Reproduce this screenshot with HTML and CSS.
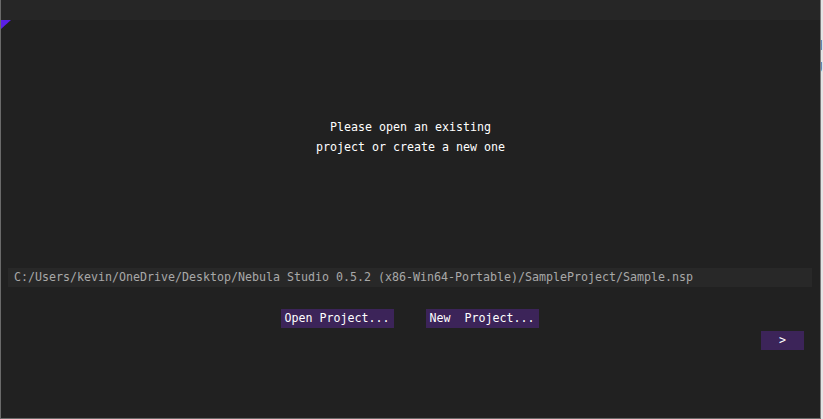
FILE: index.html
```html
<!DOCTYPE html>
<html>
<head>
<meta charset="utf-8">
<link rel="stylesheet" href="styles.css">
</head>
<body>
<div class="screen">
  <div class="window">
    <div class="titlebar"></div>
    <div class="content">
      <svg class="grip" width="10" height="9" viewBox="0 0 10 9"><polygon points="0,0 10,0 0,9" fill="#5a1fe6"/></svg>
      <div class="message">
        <div class="line">Please open an existing</div>
        <div class="line">project or create a new one</div>
      </div>
      <div class="path">C:/Users/kevin/OneDrive/Desktop/Nebula Studio 0.5.2 (x86-Win64-Portable)/SampleProject/Sample.nsp</div>
      <div class="actions">
        <button class="btn">Open Project...</button>
        <button class="btn">New  Project...</button>
      </div>
      <div class="next-row">
        <button class="btn next">&gt;</button>
      </div>
    </div>
  </div>
  <div class="desktop">
    <span class="peek peek-d">d</span>
    <span class="peek peek-g">g</span>
  </div>
</div>
</body>
</html>
```

FILE: styles.css
```css
html, body {
  margin: 0;
  padding: 0;
  width: 823px;
  height: 419px;
  overflow: hidden;
  background: #dcdcdc;
}

.screen {
  display: flex;
  width: 823px;
  height: 419px;
}

.window {
  width: 819px;
  height: 418px;
  border-left: 1px solid #6a6a6a;
  border-right: 1px solid #7a7a7a;
  border-bottom: 1px solid #6a6a6a;
  background: #212121;
  display: flex;
  flex-direction: column;
  font-family: "DejaVu Sans Mono", "Liberation Mono", monospace;
  font-size: 11.63px;
  color: #ffffff;
  flex-shrink: 0;
}

.titlebar {
  height: 20px;
  background: #262626;
  flex-shrink: 0;
}

.content {
  position: relative;
  flex: 1;
  display: flex;
  flex-direction: column;
}

.grip {
  position: absolute;
  left: 0;
  top: 0;
  display: block;
}

.message {
  margin-top: 97px;
  text-align: center;
  line-height: 20px;
}

.line {
  height: 20px;
  white-space: nowrap;
}

.path {
  margin: 111px 8px 0 7px;
  height: 19px;
  line-height: 19px;
  background: #282828;
  color: #a8a8a8;
  padding-left: 6px;
  white-space: pre;
}

.actions {
  margin-top: 22px;
  display: flex;
  justify-content: center;
  gap: 32px;
  padding-right: 2px;
}

.btn {
  font: inherit;
  color: #ffffff;
  background: #3c2459;
  border: none;
  height: 19px;
  line-height: 19px;
  padding: 0 4px;
  margin: 0;
  white-space: pre;
  width: 113px;
  text-align: left;
}

.next-row {
  margin-top: 3px;
  display: flex;
  justify-content: flex-end;
  padding-right: 16px;
}

.next {
  width: 43px;
  text-align: center;
  padding: 0;
}

.desktop {
  flex: 1;
  position: relative;
  overflow: hidden;
  background: #e4e4e4;
  font-family: "DejaVu Sans Mono", monospace;
  font-size: 13px;
  color: #555;
}

.peek {
  position: absolute;
  left: -6px;
}

.peek-d { top: 38px; }
.peek-g { top: 57px; }
```
